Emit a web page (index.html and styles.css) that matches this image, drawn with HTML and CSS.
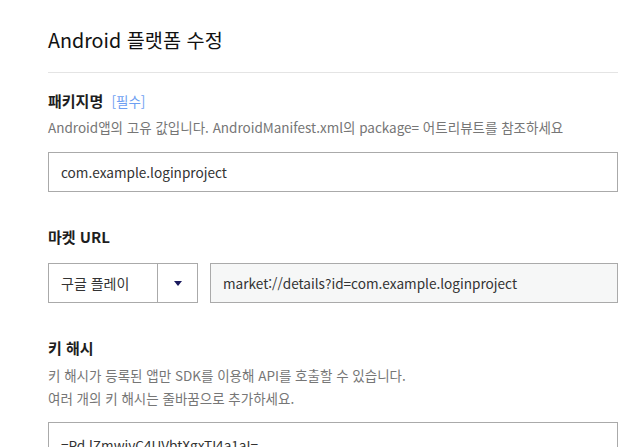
FILE: index.html
```html
<!DOCTYPE html>
<html lang="ko">
<head>
<meta charset="utf-8">
<link rel="stylesheet" href="styles.css">
</head>
<body>
<div class="panel">
  <h1 class="title">Android 플랫폼 수정</h1>
  <section class="field field-first">
    <div class="label">패키지명 <span class="req">[필수]</span></div>
    <p class="desc">Android앱의 고유 값입니다. AndroidManifest.xml의 package= 어트리뷰트를 참조하세요</p>
    <div class="input">com.example.loginproject</div>
  </section>
  <section class="field">
    <div class="label">마켓 URL</div>
    <div class="row">
      <div class="select">
        <span class="select-text">구글 플레이</span>
        <span class="select-btn"><span class="caret"></span></span>
      </div>
      <div class="input input-ro">market://details?id=com.example.loginproject</div>
    </div>
  </section>
  <section class="field">
    <div class="label">키 해시</div>
    <p class="desc desc-gap">키 해시가 등록된 앱만 SDK를 이용해 API를 호출할 수 있습니다.<br>여러 개의 키 해시는 줄바꿈으로 추가하세요.</p>
    <div class="textarea">=Pd.lZmwjyC4UVbtXgxTI4a1aI=</div>
  </section>
</div>
</body>
</html>
```
FILE: styles.css
```css
html, body {
  margin: 0;
  padding: 0;
  background: #fff;
}
body {
  font-family: "Noto Sans CJK KR", "Noto Sans", sans-serif;
  color: #222;
  overflow: hidden;
  height: 447px;
}
.panel {
  padding: 0 17px 0 48px;
}
.title {
  margin: 0;
  padding-top: 26px;
  padding-bottom: 18px;
  font-size: 19.7px;
  line-height: 28px;
  font-weight: 400;
  color: #111;
  border-bottom: 1px solid #e4e4e4;
}
.field {
  margin-top: 34px;
}
.field-first {
  margin-top: 17px;
}
.label {
  font-size: 15px;
  font-weight: 700;
  line-height: 22px;
  color: #1e1e1e;
}
.req {
  font-size: 13.5px;
  font-weight: 400;
  color: #6d9ff2;
  margin-left: 4px;
}
.desc {
  margin: 4px 0 0;
  font-size: 13.5px;
  line-height: 23px;
  color: #767676;
}
.desc-gap {
  margin-top: 5px;
}
.input {
  margin-top: 13px;
  height: 38px;
  border: 1px solid #aaa;
  padding: 0 12px;
  font-size: 13.6px;
  line-height: 38px;
  color: #333;
}
.row {
  margin-top: 15px;
  display: flex;
  gap: 12px;
}
.row .input {
  margin-top: 0;
  flex: 1;
}
.input-ro {
  background: #f6f7f7;
}
.select {
  width: 148px;
  height: 38px;
  border: 1px solid #aaa;
  display: flex;
  font-size: 14px;
  line-height: 38px;
  color: #333;
}
.select-text {
  flex: 1;
  padding-left: 12px;
  border-right: 1px solid #aaa;
}
.select-btn {
  width: 39px;
  display: flex;
  align-items: center;
  justify-content: center;
}
.caret {
  width: 0;
  height: 0;
  border-left: 4px solid transparent;
  border-right: 4px solid transparent;
  border-top: 5px solid #1a1a5e;
}
.field .desc + .textarea {
  margin-top: 12px;
}
.textarea {
  height: 80px;
  border: 1px solid #aaa;
  padding: 11px 12px;
  font-size: 13.6px;
  line-height: 22px;
  color: #333;
}
```
